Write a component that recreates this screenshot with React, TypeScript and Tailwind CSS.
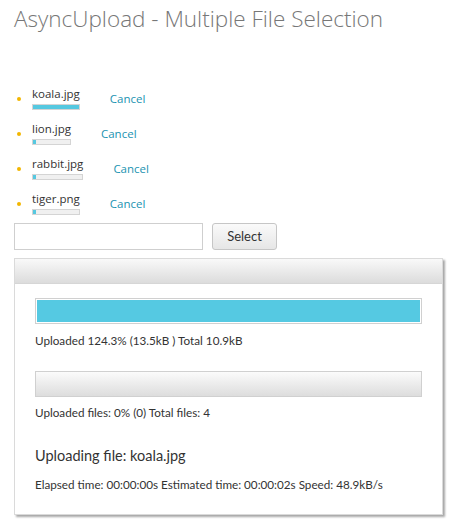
import React from "react";

type UploadFile = {
  name: string;
  done: boolean;
};

const files: UploadFile[] = [
  { name: "koala.jpg", done: true },
  { name: "lion.jpg", done: false },
  { name: "rabbit.jpg", done: false },
  { name: "tiger.png", done: false },
];

function FileRow({ file }: { file: UploadFile }) {
  return (
    <li className="flex h-[35px] items-center">
      <span className="ml-[3px] mr-[11px] h-[4px] w-[4px] rounded-full bg-[#f2b600]" />
      <div className="flex flex-col">
        <span className="font-['Open_Sans',sans-serif] text-[11.5px] leading-[14px] text-[#333]">{file.name}</span>
        <div className="mt-[3px] h-[6px] w-full border border-[#d4d4d4] bg-[#f0f0f0]">
          <div className={file.done ? "h-full w-full bg-[#55c8e0]" : "h-full w-[3px] bg-[#55c8e0]"} />
        </div>
      </div>
      <button className="ml-[30px] mt-[1px] font-['Open_Sans',sans-serif] text-[11.5px] text-[#1b93b1]">Cancel</button>
    </li>
  );
}

export default function App() {
  return (
    <div className="min-h-[529px] bg-white px-[14px] pt-[4px] font-['Lato',sans-serif] text-[#333]">
      <h1 className="font-['Open_Sans',sans-serif] text-[22.5px] font-light leading-[30px] text-[#777]">
        AsyncUpload - Multiple File Selection
      </h1>

      {/* file list */}
      <ul className="mt-[47px]">
        {files.map((f) => (
          <FileRow key={f.name} file={f} />
        ))}
      </ul>

      {/* input + select */}
      <div className="mt-[2px] flex gap-[9px]">
        <div className="h-[27px] w-[189px] border border-[#cfcfcf] bg-white" />
        <button className="h-[27px] w-[65px] rounded-[3px] border border-[#c6c6c6] bg-gradient-to-b from-[#fafafa] to-[#e6e6e6] text-[13px] text-[#333]">
          Select
        </button>
      </div>

      {/* progress panel */}
      <div className="mt-[8px] w-[429px] border border-[#dadada] bg-white shadow-[2px_2px_2px_rgba(0,0,0,0.35)]">
        <div className="h-[25px] border-b border-[#d6d6d6] bg-gradient-to-b from-[#f9f9f9] to-[#dcdcdc]" />
        <div className="px-[20px] pb-[22px] pt-[14px]">
          <div className="h-[26px] border border-[#d0d0d0] bg-white p-px">
            <div className="h-full w-full bg-[#55c9e2]" />
          </div>
          <p className="mt-[8px] text-[11.7px] leading-[16px]">Uploaded 124.3% (13.5kB ) Total 10.9kB</p>

          <div className="mt-[23px] h-[26px] border border-[#d0d0d0] bg-gradient-to-b from-[#fbfbfb] to-[#dddddd]" />
          <p className="mt-[7px] text-[11.7px] leading-[16px]">Uploaded files: 0% (0) Total files: 4</p>

          <p className="mt-[26px] text-[14.5px] leading-[20px]">Uploading file: koala.jpg</p>
          <p className="mt-[10px] text-[11.7px] leading-[16px]">
            Elapsed time: 00:00:00s Estimated time: 00:00:02s Speed: 48.9kB/s
          </p>
        </div>
      </div>
    </div>
  );
}
